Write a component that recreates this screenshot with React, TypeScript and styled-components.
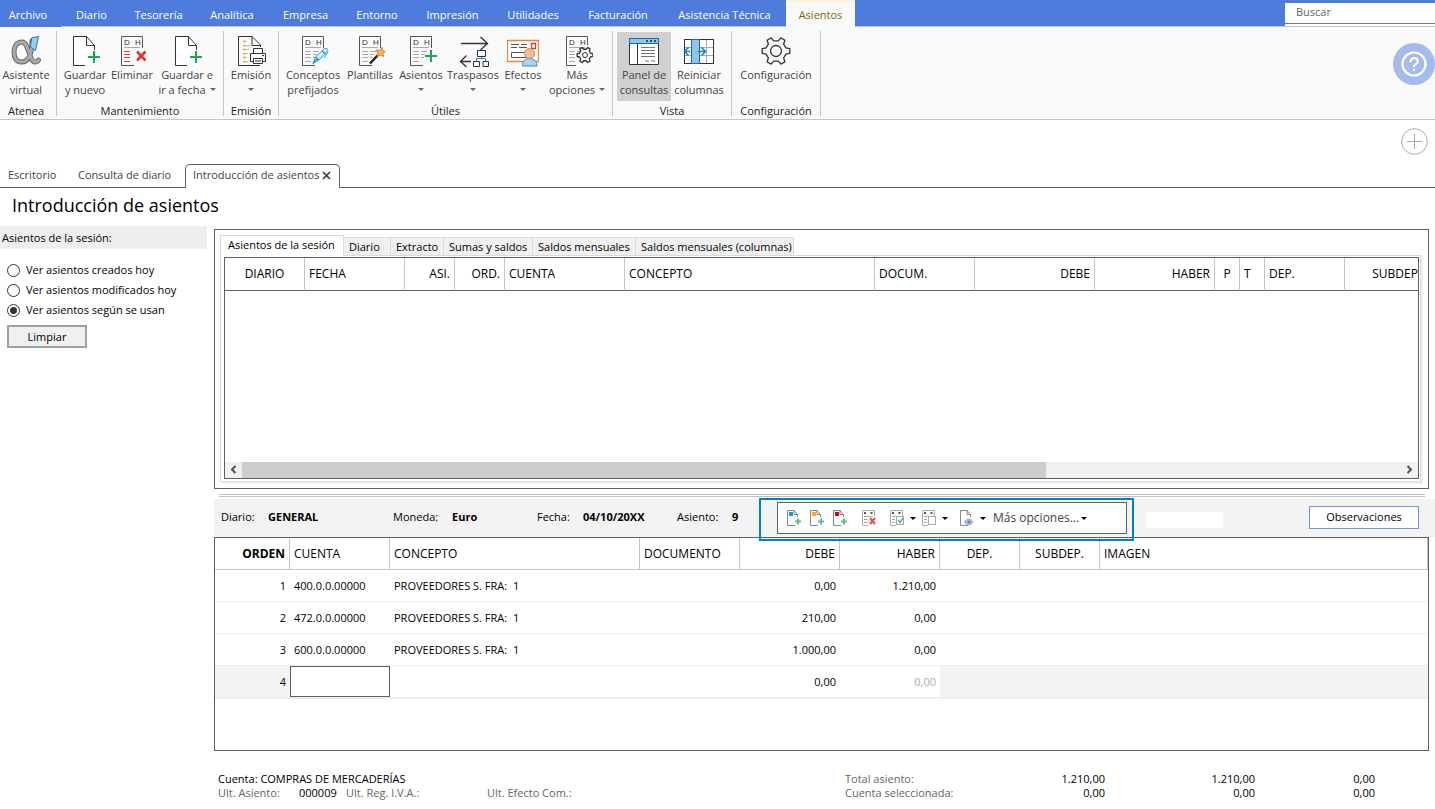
import React, { useState } from 'react';
import styled, { createGlobalStyle } from 'styled-components';

const c = {
  blue: '#4e7cdd',
  line: '#c6c6c6',
  dark: '#606060',
  soft: '#f3f3f3',
  ink: '#000',
  ribbonInk: '#444',
};

const GlobalStyle = createGlobalStyle`
  *, *::before, *::after { box-sizing: border-box; }
  body { margin: 0; background: #fff; color: ${c.ink}; font: 11px/14px "Open Sans", "Noto Sans", sans-serif; }
  button, input { font: inherit; color: inherit; }
  button { margin: 0; padding: 0; border: 0; background: none; cursor: pointer; }
  a { color: inherit; text-decoration: none; }
`;

const Page = styled.div`
  display: flex;
  flex-direction: column;
  min-height: 100vh;
`;

/* ---------- menu bar ---------- */
const MenuBar = styled.nav`
  display: flex;
  height: 27px;
  background: ${c.blue};
`;
const MenuItem = styled.a<{ $w: number }>`
  width: ${(p) => p.$w}px;
  padding-top: 2px;
  border-bottom: 1px solid ${c.line};
  color: #fff;
  line-height: 26px;
  text-align: center;
  white-space: nowrap;
  &:first-child { border-bottom-color: ${c.blue}; padding-right: 5px; }
  &[aria-current] {
    border-top: 2px solid #fdf3d3;
    border-bottom: 0;
    padding-top: 0;
    background: #fafafa;
    color: #86650c;
  }
`;
const MenuFill = styled.div`
  flex: 1;
  border-bottom: 1px solid ${c.line};
`;
const SearchSlot = styled.div`
  width: 150px;
  padding-top: 3px;
  border-bottom: 1px solid ${c.line};
  background: linear-gradient(${c.blue} 3px, #fff 3px);
`;
const Search = styled.input`
  display: block;
  width: 100%;
  height: 21px;
  padding: 0 11px 3px;
  border: 0;
  border-bottom: 1px solid #777;
  border-radius: 0;
  background: #fff;
  outline: 0;
  &::placeholder { color: #666; opacity: 1; }
`;

/* ---------- ribbon ---------- */
const Ribbon = styled.div`
  display: flex;
  align-items: flex-start;
  height: 93px;
  padding-top: 4px;
  border-bottom: 1px solid ${c.line};
  background: #fafafa;
`;
const Group = styled.section<{ $w: number }>`
  width: ${(p) => p.$w}px;
  height: 85px;
  border-right: 1px solid ${c.line};
  &:first-child { padding-right: 4px; }
`;
const GroupItems = styled.div`
  display: flex;
  height: 70px;
  padding: 1px 0 0 4px;
  ${Group}:first-child & { padding-left: 0; }
`;
const GroupName = styled.div`
  padding-top: 3px;
  line-height: 14px;
  text-align: center;
  color: #222;
`;
const RibbonButton = styled.button<{ $w: number; $on?: boolean }>`
  display: flex;
  flex: none;
  flex-direction: column;
  align-items: center;
  width: ${(p) => p.$w}px;
  height: 69px;
  padding-top: 3px;
  background: ${(p) => (p.$on ? '#d0d0d0' : 'transparent')};
  color: ${c.ribbonInk};
  line-height: 15px;
  white-space: nowrap;
  svg { flex: none; }
`;
const Line = styled.span`
  display: flex;
  align-items: center;
  justify-content: center;
  height: 15px;
`;
const Arrow = styled.span<{ $c?: string; $gap?: number }>`
  flex: none;
  margin-left: ${(p) => p.$gap ?? 0}px;
  border: 3px solid transparent;
  border-top-color: ${(p) => p.$c ?? '#666'};
  border-bottom: 0;
`;
const Help = styled.button`
  display: grid;
  place-items: center;
  width: 42px;
  height: 42px;
  margin: 12px 0 0 auto;
  border-radius: 50%;
  background: #a5bbed;
`;

/* ---------- document tabs ---------- */
const DocBar = styled.div`
  display: flex;
  align-items: flex-end;
  height: 68px;
`;
const DocTab = styled.button<{ $w: number }>`
  width: ${(p) => p.$w}px;
  height: 24px;
  padding: 0 0 2px 8px;
  border-bottom: 1px solid ${c.dark};
  color: ${c.ribbonInk};
  text-align: left;
  white-space: nowrap;
`;
const DocTabOpen = styled.div`
  display: flex;
  align-items: center;
  width: 155px;
  height: 24px;
  padding: 0 8px 3px 7px;
  justify-content: space-between;
  border: 1px solid ${c.dark};
  border-bottom: 0;
  border-radius: 5px 5px 0 0;
  color: ${c.ribbonInk};
  white-space: nowrap;
  button { display: flex; }
`;
const DocFill = styled.div`
  display: flex;
  flex: 1;
  justify-content: flex-end;
  align-items: flex-start;
  align-self: stretch;
  padding: 8px 7px 0 0;
  border-bottom: 1px solid ${c.dark};
`;
const AddTab = styled.button`
  display: flex;
`;
const Title = styled.h1`
  margin: 0;
  padding-left: 12px;
  font-size: 18px;
  font-weight: 400;
  line-height: 35px;
`;

/* ---------- body ---------- */
const Body = styled.div`
  display: flex;
  flex: 1;
`;
const Side = styled.aside`
  width: 207px;
  padding-top: 3px;
`;
const SideHead = styled.div`
  height: 23px;
  padding-left: 2px;
  margin-bottom: 11px;
  background: #eee;
  line-height: 23px;
`;
const Choice = styled.label`
  display: flex;
  align-items: center;
  gap: 6px;
  height: 20px;
  padding-left: 7px;
`;
const Radio = styled.input`
  appearance: none;
  width: 13px;
  height: 13px;
  margin: 0;
  border: 1px solid #333;
  border-radius: 50%;
  background: #fff;
  &:checked { background: radial-gradient(circle, #333 0 3px, #fff 4px); }
`;
const Clear = styled.button`
  width: 80px;
  height: 23px;
  margin: 5px 0 0 7px;
  border: 2px solid #a0a0a0;
  background: #f0f0f0;
`;
const Main = styled.main`
  display: flex;
  flex: 1;
  flex-direction: column;
  min-width: 0;
  padding: 6px 0 0 7px;
`;
const Panel = styled.section`
  margin-right: 6px;
  padding: 5px 7px 6px 5px;
  border: 1px solid ${c.dark};
`;
const Tabs = styled.div`
  display: flex;
  align-items: flex-end;
  height: 20px;
`;
const Tab = styled.button<{ $w: number; $on?: boolean }>`
  width: ${(p) => p.$w}px;
  height: ${(p) => (p.$on ? 21 : 18)}px;
  margin-bottom: ${(p) => (p.$on ? -1 : 0)}px;
  padding: 0 0 ${(p) => (p.$on ? 2 : 0)}px ${(p) => (p.$on ? 7 : 5)}px;
  border: 1px solid #dadada;
  border-left-width: ${(p) => (p.$on ? 1 : 0)}px;
  border-bottom: 0;
  background: ${(p) => (p.$on ? '#fff' : '#f0f0f0')};
  text-align: left;
  white-space: nowrap;
`;
const Pane = styled.div`
  padding: 1px 1px 2px 3px;
  border: 1px solid #dadada;
  box-shadow: 2px 2px 0 #f0f0f0;
`;
const Grid = styled.div`
  overflow: hidden;
  border: 1px solid ${c.dark};
`;
const GridBody = styled.div`
  height: 171px;
`;
const Table = styled.table<{ $over?: boolean }>`
  width: ${(p) => (p.$over ? 'calc(100% + 8px)' : '100%')};
  table-layout: fixed;
  border-collapse: separate;
  border-spacing: 0;
`;
const Th = styled.th<{ $a?: string; $b?: boolean; $line?: string }>`
  height: ${(p) => (p.$line ? 33 : 32)}px;
  padding: 0 4px;
  border-right: 1px solid ${c.line};
  border-bottom: 1px solid ${(p) => p.$line ?? c.line};
  font-size: 12px;
  font-weight: ${(p) => (p.$b ? 700 : 400)};
  text-align: ${(p) => p.$a ?? 'left'};
  white-space: nowrap;
`;
const Td = styled.td<{ $a?: string; $off?: boolean; $dim?: boolean }>`
  height: 32px;
  padding: 0 4px;
  border-bottom: 1px solid #eee;
  background: ${(p) => (p.$off ? c.soft : '#fff')};
  color: ${(p) => (p.$dim ? '#aaa' : c.ink)};
  text-align: ${(p) => p.$a ?? 'left'};
  white-space: pre;
`;
const CellInput = styled.input`
  display: block;
  width: calc(100% + 8px);
  height: 31px;
  margin: 0 -4px;
  padding: 0 3px;
  border: 1px solid ${c.dark};
  border-radius: 0;
  outline: 0;
`;
const Scroll = styled.div`
  display: flex;
  height: 16px;
  background: #f0f0f0;
`;
const ScrollButton = styled.button`
  display: grid;
  place-items: center;
  width: 17px;
  padding-bottom: 1px;
`;
const Track = styled.div`
  flex: 1;
`;
const Thumb = styled.div`
  width: 69.4%;
  height: 100%;
  background: #cdcdcd;
`;
const Splitter = styled.div`
  height: 3px;
  margin: 5px 10px 2px 5px;
  border: 1px solid #c0c0c0;
  border-width: 1px 0;
`;
const Info = styled.div`
  display: flex;
  align-items: center;
  height: 38px;
  padding-left: 7px;
  background: ${c.soft};
`;
const Field = styled.div<{ $w: number; $l: number }>`
  display: flex;
  width: ${(p) => p.$w}px;
  padding-bottom: 2px;
  span { width: ${(p) => p.$l}px; }
`;
const Slot = styled.div`
  position: relative;
  align-self: stretch;
  width: 375px;
`;
const Highlight = styled.div`
  position: absolute;
  z-index: 1;
  top: -1px;
  width: 100%;
  height: 43px;
  padding: 2px 5px 0 16px;
  border: 2px solid #0080c6;
`;
const Tools = styled.div`
  display: flex;
  align-items: center;
  height: 32px;
  padding-left: 9px;
  border: 1px solid ${c.dark};
  background: #fff;
  color: #444;
  font-size: 12px;
`;
const Tool = styled.button<{ $w: number }>`
  display: flex;
  align-items: center;
  width: ${(p) => p.$w}px;
  white-space: nowrap;
`;
const Blank = styled.div`
  width: 76px;
  height: 16px;
  margin: 4px 0 0 13px;
  background: #fff;
`;
const Notes = styled.button`
  width: 110px;
  height: 23px;
  margin: 0 16px 2px auto;
  border: 1px solid #7196e2;
  background: #fff;
`;
const Entry = styled.div`
  flex: 1;
  min-height: 214px;
  margin-right: 6px;
  border: 1px solid ${c.dark};
  tbody tr:last-child td { border-bottom-width: 2px; height: 33px; }
`;
const Footer = styled.footer`
  display: flex;
  height: 58px;
  padding: 21px 0 0 4px;
  color: #666;
`;
const FootLeft = styled.div`
  width: 627px;
`;
const FootRow = styled.div<{ $ink?: boolean }>`
  display: flex;
  height: 14px;
  color: ${(p) => (p.$ink ? c.ink : 'inherit')};
  white-space: pre;
`;
const Cell = styled.span<{ $w: number; $ink?: boolean; $r?: boolean }>`
  width: ${(p) => p.$w}px;
  color: ${(p) => (p.$ink ? c.ink : 'inherit')};
  text-align: ${(p) => (p.$r ? 'right' : 'left')};
`;
const Totals = styled.div``;

/* ---------- icons ---------- */
const Svg = ({ children }: { children: React.ReactNode }) => (
  <svg width="32" height="32" viewBox="0 0 32 32" fill="none" stroke="#333" aria-hidden="true">
    {children}
  </svg>
);

const gear = (cx: number, cy: number, r: number) => {
  const pts: string[] = [];
  for (let i = 0; i < 6; i++) {
    const a = (i * Math.PI) / 3;
    const at = (d: number, k: number) =>
      pts.push(`${(cx + k * Math.cos(a + d)).toFixed(2)} ${(cy + k * Math.sin(a + d)).toFixed(2)}`);
    at(-0.3, r * 0.74);
    at(-0.17, r);
    at(0.17, r);
    at(0.3, r * 0.74);
  }
  return `M${pts.join('L')}Z`;
};

const Plus = ({ x, y }: { x: number; y: number }) => (
  <path d={`M${x - 6} ${y}h12M${x} ${y - 6}v12`} stroke="#17a84b" strokeWidth="2" />
);

const DocPlus = () => (
  <Svg>
    <path d="M25.500 15V10.500L17.500 1.500H4.500V30.500H16" fill="#fff" />
    <path d="M17.500 1.500V10.500H25.500" />
    <Plus x={25} y={22} />
  </Svg>
);

const Sheet = ({ children, lines = true, fillTo = 18 }: { children: React.ReactNode; lines?: boolean; fillTo?: number }) => (
  <Svg>
    <path d={`M26.5 ${fillTo - 5}V1.5H5.5V30.5H${fillTo}`} stroke="#555" />
    <g fill="#333" stroke="none" fontFamily="Liberation Sans" fontSize="8">
      <text x="8" y="10">D</text>
      <text x="19" y="10">H</text>
    </g>
    <path d="M8 12.500H24" stroke="#aaa" />
    {lines && <path d="M8 16.500h6M16 16.500h6M8 19.500h6M16 19.500h4M8 22.500h6M16 22.500h3M8 26.500h6" stroke="#aaa" />}
    {children}
  </Svg>
);

const icons: Record<string, React.ReactNode> = {
  alpha: (
    <Svg>
      <g strokeLinecap="round" strokeLinejoin="round">
        <path d="M22 6C22 14 21 27 11.500 27C6 27 4 22 4 17C4 11 7 7 12 7C19 7 19 27 25 27C27 27 28 26 28.500 25" stroke="#666" strokeWidth="5" />
        <path d="M22 9C22 15 20 27 11.500 27C6 27 4 22 4 17C4 11 7 7 12 7C19 7 19 27 25 27C27 27 28 26 28.500 25" stroke="#aaa" strokeWidth="3" />
      </g>
      <path d="M21.500 3L28.500 1.500L25.500 15.500L20.500 12Z" fill="#9ccbf0" stroke="#2277c0" />
    </Svg>
  ),
  docPlus: <DocPlus />,
  remove: (
    <Sheet lines={false}>
      <path d="M8 16.500h6M8 19.500h6M8 22.500h6M8 26.500h6" stroke="#f03a3a" />
      <path d="M21 16.500l8.500 9M29.500 16.500l-8.500 9" stroke="#e83030" strokeWidth="2.600" />
    </Sheet>
  ),
  print: (
    <Svg>
      <path d="M25.500 12V10L17 1.500H3.500V30.500H25M17 1.500V10.500H25.500" />
      <path d="M8 6.500h3M8 14.500h3M8 22.500h3" stroke="#f29a38" strokeWidth="1.500" />
      <path d="M8 10.500h7M11 14.500h3M8 18.500h5M8 26.500h5" stroke="#bbb" />
      <path d="M8 11h3M8 19h3M8 27h3" stroke="#f29a38" />
      <path d="M18.500 18V13.500H27.500V18M18 26.500H15.500V18.500H30.500V26.500H28" fill="#fff" />
      <path d="M18.500 23.500H27.500V28.500H18.500ZM20 26h6M27 20.500h2" fill="#fff" />
    </Svg>
  ),
  pen: (
    <Sheet>
      <path d="M16 28.500L18.500 22L27.500 13.500Q30.500 12.500 31 15.500L22 25Z" fill="#d6effb" stroke="#259fd8" />
      <path d="M18.500 22L22 25M25 16L28.500 19M16 28.500L20 24" stroke="#259fd8" strokeWidth="1.500" />
      <path d="M31 17L27 23" stroke="#259fd8" />
    </Sheet>
  ),
  wand: (
    <Sheet>
      <path d="M16 28.500L24 20" stroke="#222" strokeWidth="2.500" />
      <path d="M28 12.500L28.500 15.500L31 16.500L29 18.500L29.500 21.500L26.500 20L23.500 21.500L24 18L22 15L25.500 15.500Z" fill="#fbb45c" stroke="#ee7a25" />
    </Sheet>
  ),
  sheetPlus: (
    <Sheet>
      <Plus x={26} y={21} />
    </Sheet>
  ),
  transfer: (
    <Svg>
      <path d="M4 8.500H30M23.500 2L30.500 8.500L23.500 15M3.500 26.500H14M9.500 20.500L3.500 26.500L9.500 32" strokeWidth="1.300" />
      <path d="M20.500 15.500h8v6h-8ZM16.500 26.500h6v5h-6ZM26 26.500h5.500v5H26Z" />
      <path d="M24.500 22v1.500M19.500 26V23.500H28.500V26" stroke="#2a86d0" />
    </Svg>
  ),
  effects: (
    <Svg>
      <path d="M.500 5.500H31.500V26.500H.500Z" fill="#fff" stroke="#ee8530" strokeWidth="1.300" />
      <path d="M4 9.500h8M14 9.500h6M4 12.500h6M12 12.500h8M4.500 17.500H19V22.500H4.500Z" stroke="#555" />
      <path d="M24.500 8.500h4v5h-4Z" stroke="#e33" strokeWidth="1.300" />
      <path d="M15.500 31C15.500 26 18 23.500 22.500 23.500S30 26 30 31Z" fill="#a9d2f2" stroke="#3a8ccb" />
      <circle cx="22.500" cy="18.500" r="5" fill="#f1bd92" stroke="#c98a5a" />
    </Svg>
  ),
  sheetGear: (
    <Sheet fillTo={15}>
      <path d={gear(24, 20, 8)} fill="#fafafa" strokeLinejoin="round" strokeWidth="1.300" />
      <circle cx="24" cy="20" r="2.500" />
    </Sheet>
  ),
  panel: (
    <Svg>
      <path d="M1.500 3.500H30.500V29.500H1.500Z" fill="#fff" />
      <path d="M9.500 9V29.500" />
      <path d="M1.500 3.500H30.500V8.500H1.500Z" fill="#8fc5ec" stroke="#1a6cb0" />
      <path d="M18 6h2M22 6h2M26 6h2" stroke="#222" strokeWidth="1.500" />
      <path d="M13 12.500h14M13 15.500h14M13 18.500h14M13 21.500h14M17 26h4M23 26h4" stroke="#777" />
    </Svg>
  ),
  columns: (
    <Svg>
      <path d="M1.500 4.500H30.500V28.500H1.500Z" fill="#fff" />
      <path d="M2 12.500H30M2 20.500H30M23.500 5V28" stroke="#aaa" />
      <path d="M1.500 4.500H30.500V28.500H1.500Z" />
      <path d="M8.500 4.500h8v24h-8Z" fill="#8fc5ec" stroke="#1a6cb0" />
      <path d="M7 16.500H2.500M5.500 12.500L1.500 16.500L5.500 20.500M15 16.500H22.500M18.500 12.500L22.500 16.500L18.500 20.500" stroke="#1a7cc8" strokeWidth="1.500" />
    </Svg>
  ),
  config: (
    <Svg>
      <path d={gear(16, 16, 14)} strokeLinejoin="round" strokeWidth="1.300" />
      <circle cx="16" cy="16" r="5.500" strokeWidth="1.300" />
    </Svg>
  ),
};

const MiniDoc = ({ mark }: { mark?: string }) => (
  <svg width="16" height="18" viewBox="0 0 16 18" fill="none" stroke="#888" aria-hidden="true">
    <path d="M7.500 1.500H.500V16.500H8M10.500 8V5.500L7 1.500V5.500H10.500" />
    {mark ? (
      <>
        <path d="M2 3h4v4H2Z" fill={mark} stroke="none" />
        <path d="M8 12.500h6M11 9.500v6" stroke="#5fc285" strokeWidth="2" />
      </>
    ) : (
      <>
        <path d="M4.500 13C6.500 9 11 9 13 13C11 17 6.500 17 4.500 13Z" fill="#a8c6de" stroke="#8fb3cf" />
        <circle cx="9" cy="13" r="1.500" fill="#4f87b0" stroke="none" />
      </>
    )}
  </svg>
);

const MiniSheet = ({ kind }: { kind: 'x' | 'check' | 'copy' }) => (
  <svg width="16" height="18" viewBox="0 0 16 18" fill="none" stroke="#aaa" aria-hidden="true">
    <path d="M12.500 7V1.500H.500V16.500H6" />
    <path d="M3 3v2M9.500 3v2" stroke="#555" strokeWidth="2" />
    <path d="M2 7.500H11" />
    <path d="M2 10.500h3M2 13.500h3" stroke={kind === 'x' ? '#f26a6a' : '#aaa'} />
    {kind === 'x' && <path d="M8 9l5 6M13 9l-5 6" stroke="#ea4a4a" strokeWidth="2" />}
    {kind !== 'x' && <rect x="6.500" y="7.500" width="7" height="8" fill="#fff" />}
    {kind === 'check' && <path d="M8 11l2 2.500L13 9" stroke="#4bb878" strokeWidth="1.500" />}
  </svg>
);

/* ---------- data ---------- */
const menu: [string, number][] = [
  ['Archivo', 61], ['Diario', 61], ['Tesorería', 73], ['Analítica', 74], ['Empresa', 73], ['Entorno', 70],
  ['Impresión', 81], ['Utilidades', 80], ['Facturación', 90], ['Asistencia Técnica', 123], ['Asientos', 69],
];

type Item = { icon: string; w: number; lines: string[]; menu?: 'below' | 'inline'; on?: boolean };
const groups: { name: string; w: number; items: Item[] }[] = [
  { name: 'Atenea', w: 57, items: [{ icon: 'alpha', w: 52, lines: ['Asistente', 'virtual'] }] },
  {
    name: 'Mantenimiento', w: 167, items: [
      { icon: 'docPlus', w: 48, lines: ['Guardar', 'y nuevo'] },
      { icon: 'remove', w: 46, lines: ['Eliminar'] },
      { icon: 'docPlus', w: 64, lines: ['Guardar e', 'ir a fecha'], menu: 'inline' },
    ],
  },
  { name: 'Emisión', w: 55, items: [{ icon: 'print', w: 46, lines: ['Emisión'], menu: 'below' }] },
  {
    name: 'Útiles', w: 334, items: [
      { icon: 'pen', w: 60, lines: ['Conceptos', 'prefijados'] },
      { icon: 'wand', w: 54, lines: ['Plantillas'] },
      { icon: 'sheetPlus', w: 48, lines: ['Asientos'], menu: 'below' },
      { icon: 'transfer', w: 56, lines: ['Traspasos'], menu: 'below' },
      { icon: 'effects', w: 44, lines: ['Efectos'], menu: 'below' },
      { icon: 'sheetGear', w: 64, lines: ['Más', 'opciones'], menu: 'inline' },
    ],
  },
  {
    name: 'Vista', w: 119, items: [
      { icon: 'panel', w: 54, lines: ['Panel de', 'consultas'], on: true },
      { icon: 'columns', w: 56, lines: ['Reiniciar', 'columnas'] },
    ],
  },
  { name: 'Configuración', w: 89, items: [{ icon: 'config', w: 80, lines: ['Configuración'] }] },
];

const sessionTabs: [string, number][] = [
  ['Asientos de la sesión', 124], ['Diario', 47], ['Extracto', 53], ['Sumas y saldos', 89],
  ['Saldos mensuales', 103], ['Saldos mensuales (columnas)', 158],
];

const sessionCols: [string, number | undefined, string?][] = [
  ['DIARIO', 80, 'center'], ['FECHA', 100], ['ASI.', 50, 'right'], ['ORD.', 50, 'right'], ['CUENTA', 120],
  ['CONCEPTO', 250], ['DOCUM.', 100], ['DEBE', 120, 'right'], ['HABER', 120, 'right'], ['P', 25, 'center'],
  ['T', 25], ['DEP.', 80], ['SUBDEP.', undefined, 'right'],
];

const entryCols: [string, number | undefined, string?][] = [
  ['ORDEN', 75, 'right'], ['CUENTA', 100], ['CONCEPTO', 250], ['DOCUMENTO', 100], ['DEBE', 100, 'right'],
  ['HABER', 100, 'right'], ['DEP.', 80, 'center'], ['SUBDEP.', 80, 'center'], ['IMAGEN', undefined],
];

const rows = [
  ['1', '400.0.0.00000', '0,00', '1.210,00'],
  ['2', '472.0.0.00000', '210,00', '0,00'],
  ['3', '600.0.0.00000', '1.000,00', '0,00'],
];

const choices = ['Ver asientos creados hoy', 'Ver asientos modificados hoy', 'Ver asientos según se usan'];

export default function App() {
  const [choice, setChoice] = useState(2);
  return (
    <Page>
      <GlobalStyle />
      <MenuBar>
        {menu.map(([label, w]) => (
          <MenuItem key={label} href="#" $w={w} aria-current={label === 'Asientos' ? 'page' : undefined}>{label}</MenuItem>
        ))}
        <MenuFill />
        <SearchSlot><Search placeholder="Buscar" aria-label="Buscar" /></SearchSlot>
      </MenuBar>

      <Ribbon>
        {groups.map((g) => (
          <Group key={g.name} $w={g.w}>
            <GroupItems>
              {g.items.map((it) => (
                <RibbonButton key={it.lines.join()} $w={it.w} $on={it.on}>
                  {icons[it.icon]}
                  <Line>{it.lines[0]}</Line>
                  <Line>
                    {it.lines[1]}
                    {it.menu && <Arrow $gap={it.menu === 'inline' ? 4 : 0} />}
                  </Line>
                </RibbonButton>
              ))}
            </GroupItems>
            <GroupName>{g.name}</GroupName>
          </Group>
        ))}
        <Help aria-label="Ayuda">
          <svg width="28" height="28" viewBox="0 0 28 28" fill="none" stroke="#fff" strokeLinecap="round" aria-hidden="true">
            <circle cx="14" cy="14" r="11.500" strokeWidth="2.200" />
            <path d="M10.500 11.500C10.500 7 17.800 7 17.800 11.500C17.800 14 14 14 14 16.500" strokeWidth="2.200" />
            <circle cx="14" cy="20" r=".500" strokeWidth="1.500" />
          </svg>
        </Help>
      </Ribbon>

      <DocBar>
        <DocTab $w={70}>Escritorio</DocTab>
        <DocTab $w={115}>Consulta de diario</DocTab>
        <DocTabOpen>
          Introducción de asientos
          <button aria-label="Cerrar">
            <svg width="9" height="9" viewBox="0 0 9 9" stroke="#333" strokeWidth="1.500" aria-hidden="true">
              <path d="M1 1L8 8M8 1L1 8" />
            </svg>
          </button>
        </DocTabOpen>
        <DocFill>
          <AddTab aria-label="Nueva pestaña">
            <svg width="27" height="27" viewBox="0 0 27 27" fill="none" stroke="#aaa" aria-hidden="true">
              <circle cx="13.500" cy="13.500" r="12.800" />
              <path d="M6 13.500H21M13.500 6V21" />
            </svg>
          </AddTab>
        </DocFill>
      </DocBar>
      <Title>Introducción de asientos</Title>

      <Body>
        <Side>
          <SideHead>Asientos de la sesión:</SideHead>
          {choices.map((label, i) => (
            <Choice key={label}>
              <Radio type="radio" name="ver" checked={choice === i} onChange={() => setChoice(i)} />
              {label}
            </Choice>
          ))}
          <Clear>Limpiar</Clear>
        </Side>

        <Main>
          <Panel>
            <Tabs>
              {sessionTabs.map(([label, w], i) => (
                <Tab key={label} $w={w} $on={i === 0}>{label}</Tab>
              ))}
            </Tabs>
            <Pane>
              <Grid>
                <Table $over>
                  <colgroup>{sessionCols.map(([n, w]) => <col key={n} width={w} />)}</colgroup>
                  <thead>
                    <tr>{sessionCols.map(([n, , a]) => <Th key={n} $a={a} $line={c.dark}>{n}</Th>)}</tr>
                  </thead>
                </Table>
                <GridBody />
                <Scroll>
                  <ScrollButton aria-label="Desplazar a la izquierda">
                    <svg width="7" height="9" viewBox="0 0 7 9" fill="none" stroke="#505050" strokeWidth="2" aria-hidden="true"><path d="M5.500 1L2 4.500L5.500 8" /></svg>
                  </ScrollButton>
                  <Track><Thumb /></Track>
                  <ScrollButton aria-label="Desplazar a la derecha">
                    <svg width="7" height="9" viewBox="0 0 7 9" fill="none" stroke="#505050" strokeWidth="2" aria-hidden="true"><path d="M1.500 1L5 4.500L1.500 8" /></svg>
                  </ScrollButton>
                </Scroll>
              </Grid>
            </Pane>
          </Panel>
          <Splitter />
          <Info>
            <Field $w={172} $l={47}><span>Diario:</span><b>GENERAL</b></Field>
            <Field $w={144} $l={59}><span>Moneda:</span><b>Euro</b></Field>
            <Field $w={140} $l={46}><span>Fecha:</span><b>04/10/20XX</b></Field>
            <Field $w={82} $l={55}><span>Asiento:</span><b>9</b></Field>
            <Slot>
              <Highlight>
                <Tools>
                  <Tool $w={23} aria-label="Nuevo apunte"><MiniDoc mark="#1a9be0" /></Tool>
                  <Tool $w={23} aria-label="Insertar apunte"><MiniDoc mark="#f5a623" /></Tool>
                  <Tool $w={29} aria-label="Duplicar apunte"><MiniDoc mark="#d8001c" /></Tool>
                  <Tool $w={28} aria-label="Eliminar apunte"><MiniSheet kind="x" /></Tool>
                  <Tool $w={32} aria-label="Marcar"><MiniSheet kind="check" /><Arrow $c="#000" $gap={4} /></Tool>
                  <Tool $w={38} aria-label="Copiar"><MiniSheet kind="copy" /><Arrow $c="#000" $gap={4} /></Tool>
                  <Tool $w={33} aria-label="Ver documento"><MiniDoc /><Arrow $c="#000" $gap={4} /></Tool>
                  <Tool $w={100}>Más opciones...<Arrow $c="#000" $gap={2} /></Tool>
                </Tools>
              </Highlight>
            </Slot>
            <Blank />
            <Notes>Observaciones</Notes>
          </Info>
          <Entry>
            <Table>
              <colgroup>{entryCols.map(([n, w]) => <col key={n} width={w} />)}</colgroup>
              <thead>
                <tr>{entryCols.map(([n, , a], i) => <Th key={n} $a={a} $b={i === 0}>{n}</Th>)}</tr>
              </thead>
              <tbody>
                {rows.map(([n, account, debit, credit]) => (
                  <tr key={n}>
                    <Td $a="right">{n}</Td>
                    <Td>{account}</Td>
                    <Td>{'PROVEEDORES S. FRA:  1'}</Td>
                    <Td />
                    <Td $a="right">{debit}</Td>
                    <Td $a="right">{credit}</Td>
                    <Td /><Td /><Td />
                  </tr>
                ))}
                <tr>
                  <Td $a="right" $off>4</Td>
                  <Td><CellInput aria-label="Cuenta" /></Td>
                  <Td /><Td />
                  <Td $a="right">0,00</Td>
                  <Td $a="right" $dim>0,00</Td>
                  <Td $off /><Td $off /><Td $off />
                </tr>
              </tbody>
            </Table>
          </Entry>
          <Footer>
            <FootLeft>
              <FootRow $ink>Cuenta: COMPRAS DE MERCADERÍAS</FootRow>
              <FootRow>
                <Cell $w={81}>Ult. Asiento:</Cell>
                <Cell $w={47} $ink>000009</Cell>
                <Cell $w={141}>Ult. Reg. I.V.A.:</Cell>
                <Cell $w={120}>Ult. Efecto Com.:</Cell>
              </FootRow>
            </FootLeft>
            <Totals>
              <FootRow>
                <Cell $w={140}>Total asiento:</Cell>
                <Cell $w={120} $ink $r>1.210,00</Cell>
                <Cell $w={150} $ink $r>1.210,00</Cell>
                <Cell $w={120} $ink $r>0,00</Cell>
              </FootRow>
              <FootRow>
                <Cell $w={140}>Cuenta seleccionada:</Cell>
                <Cell $w={120} $ink $r>0,00</Cell>
                <Cell $w={150} $ink $r>0,00</Cell>
                <Cell $w={120} $ink $r>0,00</Cell>
              </FootRow>
            </Totals>
          </Footer>
        </Main>
      </Body>
    </Page>
  );
}
